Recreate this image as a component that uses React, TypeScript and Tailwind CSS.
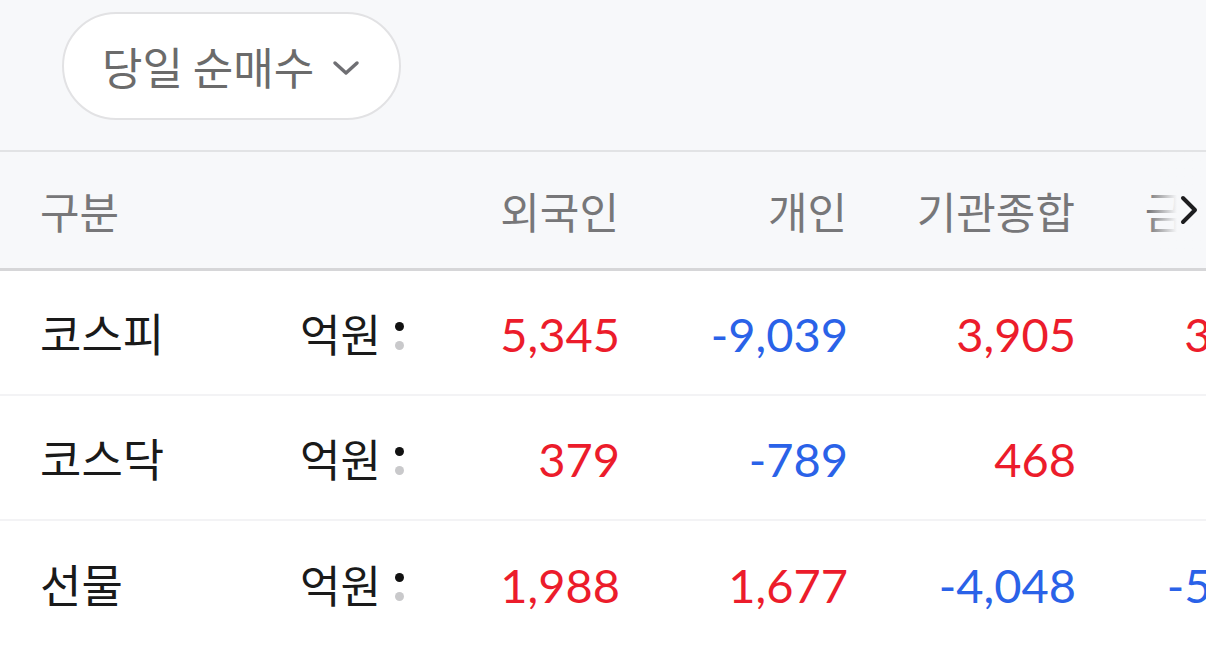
import React from "react";

type Cell = { v: string; c: "r" | "b" };
const rows: { name: string; cells: Cell[] }[] = [
  { name: "코스피", cells: [{ v: "5,345", c: "r" }, { v: "-9,039", c: "b" }, { v: "3,905", c: "r" }, { v: "3,218", c: "r" }] },
  { name: "코스닥", cells: [{ v: "379", c: "r" }, { v: "-789", c: "b" }, { v: "468", c: "r" }, { v: "52", c: "r" }] },
  { name: "선물", cells: [{ v: "1,988", c: "r" }, { v: "1,677", c: "r" }, { v: "-4,048", c: "b" }, { v: "-5,127", c: "b" }] },
];

const font = { fontFamily: "Lato, 'Noto Sans CJK KR', sans-serif" };
const kr = { fontFamily: "'Noto Sans CJK KR', sans-serif" };

export default function App() {
  return (
    <div className="w-[1206px] h-[646px] overflow-hidden bg-white" style={font}>
      <div className="bg-[#f7f8fa] h-[152px] pt-[12px] pl-[62px] border-b-2 border-[#e2e3e5]">
        <button className="h-[108px] w-[339px] rounded-full border-2 border-[#e2e2e4] bg-white flex items-center pl-[38px] gap-[18px] text-[#6b6b6b] text-[44px] leading-none">
          <span style={kr}>당일 순매수</span>
          <svg width="28" height="18" viewBox="0 0 28 18" className="mt-[4px]">
            <path d="M3 4 L14 14 L25 4" fill="none" stroke="#6f6f73" strokeWidth="3.5" strokeLinecap="round" strokeLinejoin="round" />
          </svg>
        </button>
      </div>
      <div className="relative flex items-center h-[119px] bg-[#f7f8fa] border-b-[3px] border-[#d6d6d8] pl-[40px] text-[43px] text-[#777779]" style={kr}>
        <div className="w-[370px] shrink-0">구분</div>
        <div className="w-[209px] shrink-0 text-right">외국인</div>
        <div className="w-[228px] shrink-0 text-right">개인</div>
        <div className="w-[228px] shrink-0 text-right">기관종합</div>
        <div className="w-[228px] shrink-0 text-right">금융투자</div>
        <div className="absolute right-0 top-0 h-full w-[58px] flex items-center justify-end pr-[6px] bg-gradient-to-r from-[#f7f8fa00] via-[#f7f8fa] via-50% to-[#f7f8fa]">
          <svg width="22" height="32" viewBox="0 0 22 32">
            <path d="M5 4 L17 16 L5 28" fill="none" stroke="#1d1d1f" strokeWidth="4" strokeLinecap="round" strokeLinejoin="round" />
          </svg>
        </div>
      </div>
      {rows.map((r, i) => (
        <div key={r.name} className={`flex items-center h-[125px] pl-[40px] ${i < rows.length - 1 ? "border-b-2 border-[#f3f3f5]" : ""}`}>
          <div className="w-[260px] shrink-0 text-[45px] text-[#1a1a1a]" style={kr}>{r.name}</div>
          <div className="w-[110px] shrink-0 flex items-center gap-[14px]">
            <span className="text-[44px] text-[#1a1a1a]" style={kr}>억원</span>
            <span className="flex flex-col gap-[10px] mt-[6px]">
              <span className="block w-[9px] h-[9px] rounded-full bg-[#111]" />
              <span className="block w-[9px] h-[9px] rounded-full bg-[#c9c9cb]" />
            </span>
          </div>
          {r.cells.map((c, j) => (
            <div
              key={j}
              className={`${j === 0 ? "w-[210px]" : "w-[228px]"} shrink-0 text-right text-[47px] mt-[4px] ${c.c === "r" ? "text-[#ec1c2b]" : "text-[#2a62e8]"}`}
            >
              {c.v}
            </div>
          ))}
        </div>
      ))}
    </div>
  );
}
